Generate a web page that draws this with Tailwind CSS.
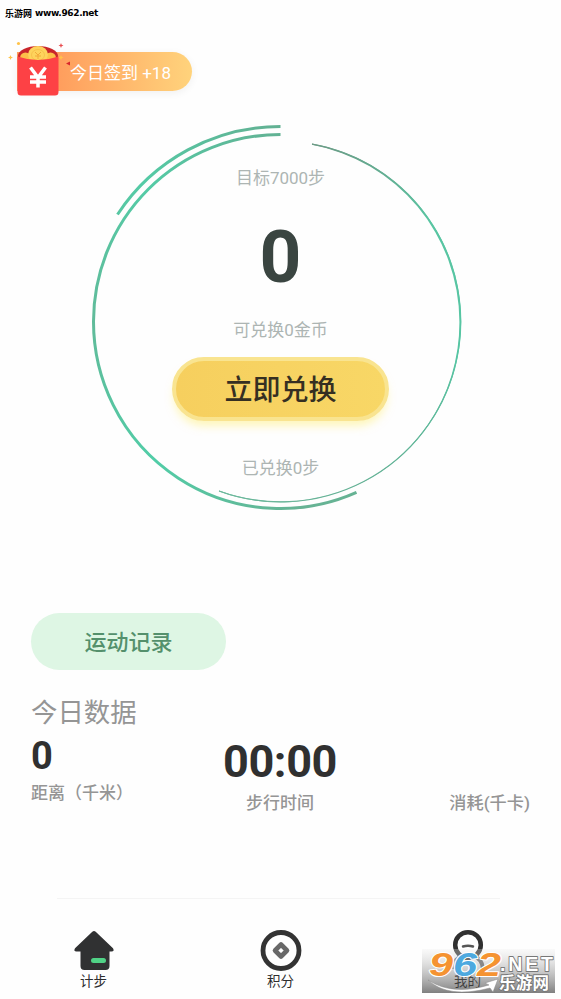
<!DOCTYPE html>
<html lang="zh-CN">
<head>
<meta charset="utf-8">
<meta name="viewport" content="width=device-width, initial-scale=1">
<title>计步</title>
<script src="https://cdn.jsdelivr.net/npm/@tailwindcss/browser@4"></script>
</head>
<body class="bg-white">
<div class="relative w-[561px] h-[999px] overflow-hidden bg-[#fefefe] flex flex-col font-['Roboto','Noto_Sans_CJK_SC',sans-serif]">

  <!-- Site label and sign-in badge -->
  <header class="h-[110px] shrink-0 flex flex-col">
    <div class="h-[26px] pl-[5px] flex items-center gap-[3px] text-black font-bold leading-none whitespace-nowrap">
      <span class="text-[9px] font-['Noto_Sans_CJK_SC',sans-serif]">乐游网</span>
      <span class="text-[9px] tracking-[-0.35px] font-['DejaVu_Sans',sans-serif]">www.962.net</span>
    </div>
    <div class="mt-[26px] ml-[17px] relative w-[175px] h-[39px] rounded-r-full bg-linear-to-r from-[#ff9b5c] from-20% to-[#ffd37c] shadow-[0_2px_8px_rgba(0,0,0,0.06)] flex items-center">
      <span class="pl-[53px] pt-[3px] text-[17px] leading-none text-white whitespace-nowrap">今日签到 +18</span>
      <svg class="absolute left-[-10px] top-[-12px]" width="66" height="58" viewBox="7 40 66 58">
        <ellipse cx="38" cy="56" rx="20" ry="10" fill="#c9252b"/>
        <circle cx="25.500" cy="58" r="5.500" fill="#fdbf49"/>
        <circle cx="50.500" cy="58" r="5.500" fill="#fdbf49"/>
        <ellipse cx="38" cy="54.500" rx="10" ry="8.500" fill="#fed35c"/>
        <ellipse cx="38" cy="55" rx="6.500" ry="5.500" fill="none" stroke="#f8c24c" stroke-width="1"/>
        <path d="M35 52l3 3 3-3M35 56h6M38 55v4" fill="none" stroke="#f2a93a" stroke-width="1"/>
        <path d="M17.500 56.500Q38 63.500 58.500 56.500V92q0 3.500-3.500 3.500H21q-3.500 0-3.500-3.500Z" fill="#fd4145"/>
        <path d="M30.500 67.500l7.500 10 7.500-10M38 77v10.500M30 77h16M30 82h16" fill="none" stroke="#fff" stroke-width="3.500"/>
        <g fill="#ffc34a"><circle cx="18.500" cy="43.500" r="1.600"/><path d="M10.500 55l.7 1.800 1.800.7-1.800.7-.7 1.800-.7-1.800-1.800-.7 1.800-.7zM61 55l.8 1.800 1.800.7-1.800.7-.8 1.800-.8-1.800-1.800-.7 1.800-.7z"/></g>
        <path d="M61 43l.7 1.800 1.800.7-1.800.7-.7 1.800-.7-1.800-1.800-.7 1.800-.7z" fill="#e84d50"/>
        <path d="M66 63.500l4-2v4z" fill="#d8262c"/>
      </svg>
    </div>
  </header>

  <!-- Step ring -->
  <section class="relative h-[420px] shrink-0 flex flex-col items-center text-[#adb5b3] text-[17px] leading-none">
    <svg class="absolute left-0 top-0" width="561" height="420" viewBox="0 110 561 420" fill="none">
      <defs>
        <linearGradient id="ul" gradientUnits="userSpaceOnUse" x1="93" y1="321" x2="280" y2="130"><stop offset="0" stop-color="#60bb9a"/><stop offset=".5" stop-color="#54cba6"/><stop offset="1" stop-color="#62b193"/></linearGradient>
        <linearGradient id="ll" gradientUnits="userSpaceOnUse" x1="93" y1="321" x2="300" y2="508"><stop offset="0" stop-color="#60bb9a"/><stop offset=".5" stop-color="#51cda7"/><stop offset="1" stop-color="#66b394"/></linearGradient>
        <linearGradient id="rt" gradientUnits="userSpaceOnUse" x1="312" y1="144" x2="440" y2="502"><stop offset="0" stop-color="#6c9b86"/><stop offset=".3" stop-color="#59c5a2"/><stop offset=".65" stop-color="#56c5a3"/><stop offset="1" stop-color="#6aa78e"/></linearGradient>
      </defs>
      <path d="M117.500 214.500A195 195 0 0 1 280.500 126.500" stroke="url(#ul)" stroke-width="3"/>
      <path d="M93.500 321.500A187 187 0 0 1 280.500 134.500" stroke="url(#ul)" stroke-width="3"/>
      <path d="M93.500 321A187 187 0 0 0 356.500 492.400" stroke="url(#ll)" stroke-width="3"/>
      <path d="M312 143.600A180.700 180.700 0 0 1 461.200 321.500A180.700 180.700 0 0 1 342 491.500A179.900 179.900 0 0 0 459.400 321.500A180.500 180.500 0 0 0 312 144.800Z" fill="url(#rt)"/>
      <path d="M312 144.200A180.200 180.200 0 1 1 219 491" stroke="url(#rt)" stroke-width="1.200"/>
      <path d="M219 490.600A180.200 180.200 0 0 0 342 491A176 176 0 0 1 219 491.400Z" fill="#6eb79b"/>
    </svg>
    <p class="relative mt-[60px]">目标7000步</p>
    <p class="relative mt-[34px] text-[73px] font-bold text-[#3a4541]">0</p>
    <p class="relative mt-[28px]">可兑换0金币</p>
    <button class="relative mt-[18px] pt-[3px] w-[217px] h-[64px] rounded-full border-4 border-[#f9e490] bg-linear-to-r from-[#f6cf5e] to-[#f8d766] shadow-[0_7px_9px_-2px_rgba(255,240,120,0.5)] text-[28px] font-medium leading-none text-[#352f22]">立即兑换</button>
    <p class="relative mt-[39px]">已兑换0步</p>
  </section>

  <!-- Daily stats -->
  <section class="h-[368px] shrink-0 pt-[83px] pl-[31px] flex flex-col items-start">
    <button class="w-[195px] h-[57px] pt-[2px] rounded-full bg-[#def6e4] text-[22px] font-medium leading-none text-[#54906c]">运动记录</button>
    <h2 class="mt-[30px] text-[26.4px] leading-[26px] text-[#959595]">今日数据</h2>
    <div class="w-[499px] grid grid-cols-[165px_168px_166px] text-[17px] font-medium leading-none text-[#959595] whitespace-nowrap">
      <div class="pt-[11px]">
        <div class="text-[38px] font-bold text-[#303030]">0</div>
        <div class="mt-[10px]">距离（千米）</div>
      </div>
      <div class="pt-[13px] flex flex-col items-center">
        <div class="text-[45px] tracking-[-0.4px] font-bold text-[#303030]">00:00</div>
        <div class="mt-[11px]">步行时间</div>
      </div>
      <div class="pt-[69px] text-right text-[17.2px]">消耗(千卡)</div>
    </div>
  </section>

  <!-- Tab bar -->
  <nav class="h-[101px] shrink-0">
    <div class="ml-[57px] w-[443px] h-px bg-[#f4f4f4]"></div>
    <div class="grid grid-cols-3 pt-[30px] text-[13.5px] leading-none text-[#2d2d2d]">
      <div class="flex flex-col items-center gap-[4px]">
        <svg width="42" height="42" viewBox="0 0 42 42"><path d="M19.300 2.800q1.700-1.500 3.400 0L40 19.300q1.800 3.200-1.500 3.200H36.500V37q0 4-4 4h-21q-4 0-4-4V22.500H3.500Q.2 22.500 2 19.300Z" fill="#303132"/><rect x="18" y="29" width="15" height="5" rx="2.500" fill="#50d286"/></svg>
        <span>计步</span>
      </div>
      <div class="flex flex-col items-center gap-[4px]">
        <svg width="42" height="42" viewBox="0 0 42 42"><circle cx="21" cy="21.500" r="18" fill="none" stroke="#333" stroke-width="4.800"/><path d="M21 15.500l6 6-6 6-6-6z" fill="none" stroke="#686868" stroke-width="4.600" stroke-linejoin="round"/></svg>
        <span>积分</span>
      </div>
      <div class="flex flex-col items-center gap-[4px]">
        <svg width="42" height="42" viewBox="0 0 42 42"><circle cx="21" cy="16" r="12.800" fill="none" stroke="#303030" stroke-width="4.500"/><path d="M16 17.500q5-1.500 10 0" fill="none" stroke="#555" stroke-width="2.500" stroke-linecap="round"/><path d="M6 40Q7 29 16 27M36 40Q35 29 26 27" fill="none" stroke="#666" stroke-width="4"/></svg>
        <span class="text-black">我的</span>
      </div>
    </div>
  </nav>

  <!-- Site watermark over the tab bar -->
  <svg class="absolute left-[422px] top-[943px]" width="139" height="52" viewBox="422 943 139 52">
    <defs><linearGradient id="wm" x1="0" y1="0" x2="0" y2="1"><stop offset="0" stop-color="#eee" stop-opacity=".3"/><stop offset=".5" stop-color="#999" stop-opacity=".5"/><stop offset="1" stop-color="#444" stop-opacity=".68"/></linearGradient></defs>
    <rect x="422" y="949" width="133" height="44" fill="url(#wm)"/>
    <path d="M428 980Q452 996 489 985L485 983 498 979 493 992 490 988Q448 999 428 980Z" fill="#fff" stroke="#888" stroke-width=".5"/>
    <g font-family="'Liberation Sans',sans-serif" font-weight="bold" font-style="italic" font-size="34" stroke="#fff" stroke-width="2" paint-order="stroke" stroke-linejoin="round">
      <text x="429" y="976" textLength="24" lengthAdjust="spacingAndGlyphs" fill="#f59331">9</text>
      <text x="453" y="976" textLength="24" lengthAdjust="spacingAndGlyphs" fill="#4da9df">6</text>
      <text x="477" y="976" textLength="24" lengthAdjust="spacingAndGlyphs" fill="#f59331">2</text>
    </g>
    <g fill="#fff" stroke="#777" stroke-width="1.800" paint-order="stroke" stroke-linejoin="round" font-weight="bold">
      <text x="500" y="971" font-family="'Liberation Sans',sans-serif" font-size="19.500" textLength="53" lengthAdjust="spacing">.NET</text>
      <text x="499" y="989" font-family="'Noto Sans CJK SC',sans-serif" font-size="16.500" textLength="50" lengthAdjust="spacing">乐游网</text>
    </g>
  </svg>
</div>
</body>
</html>
